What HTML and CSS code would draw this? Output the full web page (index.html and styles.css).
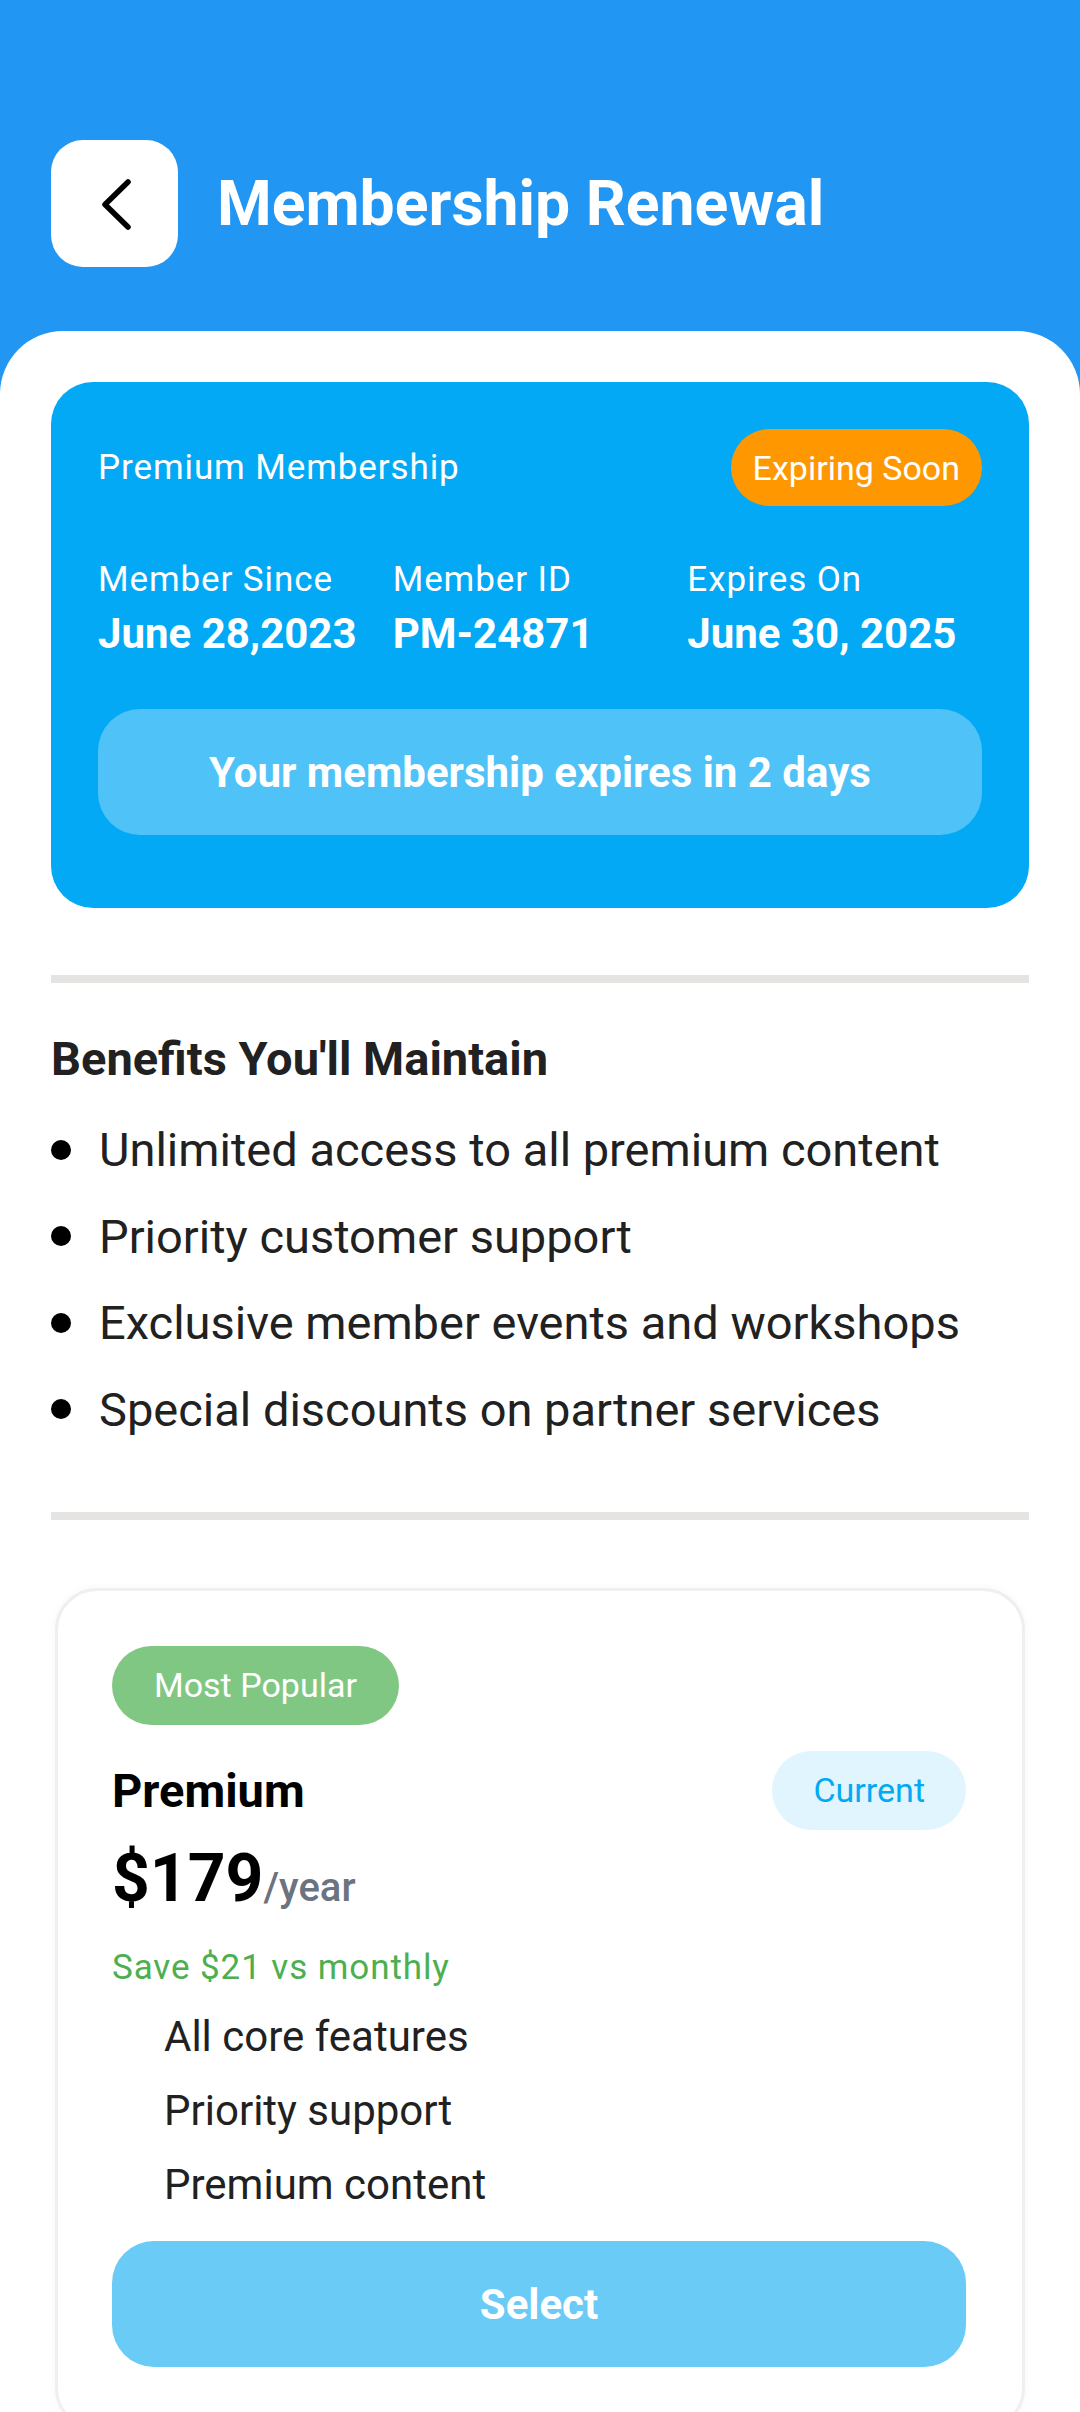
FILE: index.html
```html
<!DOCTYPE html>
<html lang="en">
<head>
<meta charset="utf-8">
<title>Membership Renewal</title>
<link rel="stylesheet" href="styles.css">
</head>
<body>
<div class="app">
  <header class="topbar">
    <button class="back-btn" aria-label="Back">
      <svg width="40" height="60" viewBox="0 0 40 60"><path d="M33 8 L10 30.5 L33 53" fill="none" stroke="#000" stroke-width="5.5" stroke-linecap="round" stroke-linejoin="round"/></svg>
    </button>
    <h1 class="title">Membership Renewal</h1>
  </header>

  <main class="sheet">
    <section class="member-card">
      <div class="mc-head">
        <span class="mc-name">Premium Membership</span>
        <span class="badge-expiring">Expiring Soon</span>
      </div>
      <div class="mc-info">
        <div class="mc-col">
          <span class="mc-label">Member Since</span>
          <span class="mc-value">June 28,2023</span>
        </div>
        <div class="mc-col">
          <span class="mc-label">Member ID</span>
          <span class="mc-value">PM-24871</span>
        </div>
        <div class="mc-col">
          <span class="mc-label">Expires On</span>
          <span class="mc-value">June 30, 2025</span>
        </div>
      </div>
      <div class="mc-alert">Your membership expires in 2 days</div>
    </section>

    <hr class="divider divider-1">

    <section class="benefits">
      <h2 class="benefits-title">Benefits You'll Maintain</h2>
      <ul class="benefit-list">
        <li class="benefit"><span class="dot"></span>Unlimited access to all premium content</li>
        <li class="benefit"><span class="dot"></span>Priority customer support</li>
        <li class="benefit"><span class="dot"></span>Exclusive member events and workshops</li>
        <li class="benefit"><span class="dot"></span>Special discounts on partner services</li>
      </ul>
    </section>

    <hr class="divider divider-2">

    <section class="plan-card">
      <span class="badge-popular">Most Popular</span>
      <div class="plan-head">
        <span class="plan-name">Premium</span>
        <span class="badge-current">Current</span>
      </div>
      <div class="plan-price"><span class="price">$179</span><span class="period">/year</span></div>
      <div class="plan-save">Save $21 vs monthly</div>
      <ul class="plan-features">
        <li>All core features</li>
        <li>Priority support</li>
        <li>Premium content</li>
      </ul>
      <button class="select-btn">Select</button>
    </section>
  </main>
</div>
</body>
</html>
```

FILE: styles.css
```css
* { box-sizing: border-box; }
html, body { margin: 0; padding: 0; }
body {
  font-family: "Roboto", "Noto Sans", sans-serif;
  background: #2196F3;
  width: 1080px;
  height: 2412px;
  overflow: hidden;
}
.app {
  background: #2196F3;
  min-height: 2412px;
}
.topbar {
  display: flex;
  align-items: center;
  gap: 39px;
  padding: 140px 51px 64px;
  height: 331px;
}
.back-btn {
  width: 127px;
  height: 127px;
  border: none;
  border-radius: 32px;
  background: #fff;
  display: flex;
  align-items: center;
  justify-content: center;
  padding: 0;
  flex: none;
}
.back-btn svg { display: block; }
.title {
  margin: 0;
  color: #fff;
  font-size: 62.5px;
  font-weight: 700;
  line-height: 74px;
}
.sheet {
  background: #fff;
  border-radius: 63px 63px 0 0;
  padding: 51px 51px 0;
  min-height: 2081px;
}
.member-card {
  background: #03A9F4;
  border-radius: 42px;
  padding: 47px 47px 73px;
  color: #fff;
}
.mc-head {
  display: flex;
  justify-content: space-between;
  align-items: center;
  height: 77px;
}
.mc-name {
  font-size: 35px;
  line-height: 40px;
  letter-spacing: 0.9px;
}
.badge-expiring {
  background: #FF9800;
  color: #fff;
  font-size: 34px;
  line-height: 40px;
  height: 77px;
  padding: 18.5px 22px;
  border-radius: 39px;
}
.mc-info {
  display: flex;
  margin-top: 53.5px;
}
.mc-col {
  flex: 1;
  display: flex;
  flex-direction: column;
}
.mc-label {
  font-size: 35px;
  line-height: 40px;
  letter-spacing: 0.9px;
}
.mc-value {
  font-size: 42px;
  line-height: 49px;
  font-weight: 700;
  margin-top: 9.5px;
}
.mc-alert {
  margin-top: 51px;
  height: 126px;
  border-radius: 42px;
  background: rgba(255, 255, 255, 0.3);
  display: flex;
  align-items: center;
  justify-content: center;
  font-size: 42px;
  font-weight: 700;
}
.divider {
  border: none;
  height: 8px;
  background: #E6E3E3;
  margin: 0;
}
.divider-1 { margin-top: 67px; }
.benefits-title {
  margin: 48px 0 0;
  font-size: 47px;
  line-height: 55px;
  font-weight: 700;
  color: #212121;
}
.benefit-list {
  list-style: none;
  margin: 36px 0 0;
  padding: 0;
  display: flex;
  flex-direction: column;
  gap: 31.5px;
}
.benefit {
  display: flex;
  align-items: center;
  font-size: 47px;
  line-height: 55px;
  color: #212121;
}
.dot {
  width: 20px;
  height: 20px;
  border-radius: 50%;
  background: #000;
  margin-right: 28px;
  flex: none;
}
.divider-2 { margin-top: 75px; }
.plan-card {
  margin: 68px 4px 0;
  border: 3px solid #F0EEEE;
  border-radius: 42px;
  box-shadow: 0 0 10px rgba(0, 0, 0, 0.04);
  padding: 55px 56px 60px 54px;
  display: flex;
  flex-direction: column;
  align-items: flex-start;
  background: #fff;
}
.badge-popular {
  background: #81C784;
  color: #fff;
  font-size: 34px;
  line-height: 40px;
  height: 79px;
  padding: 19.5px 42px;
  border-radius: 40px;
}
.plan-head {
  align-self: stretch;
  display: flex;
  justify-content: space-between;
  align-items: center;
  margin-top: 26px;
}
.plan-name {
  font-size: 47px;
  font-weight: 700;
  color: #000;
  line-height: 55px;
}
.badge-current {
  background: #E1F5FE;
  color: #03A9F4;
  font-size: 34px;
  line-height: 40px;
  height: 79px;
  padding: 19.5px 41px;
  border-radius: 40px;
}
.plan-price {
  margin-top: 10px;
  line-height: 77px;
  display: flex;
  align-items: baseline;
}
.price {
  font-size: 66px;
  font-weight: 700;
  color: #000;
}
.period {
  font-size: 40px;
  font-weight: 500;
  color: #6B7280;
}
.plan-save {
  margin-top: 22.5px;
  font-size: 35px;
  line-height: 40px;
  letter-spacing: 0.9px;
  color: #4CAF50;
}
.plan-features {
  list-style: none;
  margin: 12px 0 0;
  padding: 0 0 0 52px;
}
.plan-features li {
  font-size: 42px;
  line-height: 74px;
  color: #212121;
}
.select-btn {
  align-self: stretch;
  margin-top: 19px;
  height: 126px;
  border: none;
  border-radius: 42px;
  background: #6ACBF7;
  color: #fff;
  font-family: "Roboto", sans-serif;
  font-size: 42px;
  font-weight: 700;
}
```
